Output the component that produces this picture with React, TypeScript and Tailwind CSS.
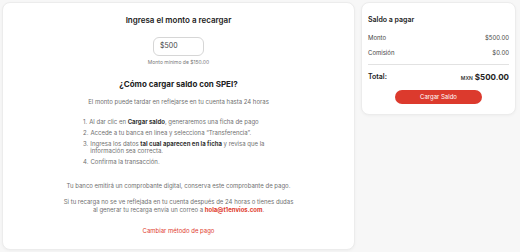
import React from "react";

export default function App() {
  const steps = [
    <>
      Al dar clic en <b className="font-bold text-[#333]">Cargar saldo</b>, generaremos una ficha de pago
    </>,
    <>Accede a tu banca en línea y selecciona “Transferencia”.</>,
    <>
      Ingresa los datos <b className="font-bold text-[#333]">tal cual aparecen en la ficha</b> y revisa que la
      <br />
      información sea correcta.
    </>,
    <>Confirma la transacción.</>,
  ];

  return (
    <div className="w-[520px] h-[252px] bg-[#f7f7f7] p-[2px] flex gap-[6px] items-start font-['Inter',sans-serif] text-[#222]">
      <section className="w-[353px] h-[248px] bg-white border border-[#ececec] rounded-[8px] shadow-[0_1px_3px_rgba(0,0,0,0.04)] flex flex-col items-center pt-[12px]">
        <h2 className="text-[8px] font-semibold leading-[10px]">Ingresa el monto a recargar</h2>
        <div className="mt-[12px] w-[51px] h-[19px] border border-[#d6d6d6] rounded-[6px] flex items-center px-[6px] text-[7px] text-[#444]">
          $500
        </div>
        <p className="mt-[3px] text-[5px] text-[#777] leading-[6px]">Monto mínimo de $150.00</p>
        <h2 className="mt-[14px] text-[8px] font-bold leading-[10px]">¿Cómo cargar saldo con SPEI?</h2>
        <p className="mt-[9px] text-[6px] text-[#707070] leading-[8px]">
          El monto puede tardar en reflejarse en tu cuenta hasta 24 horas
        </p>
        <ol className="mt-[12px] w-[220px] self-start ml-[80px] flex flex-col gap-[4px] text-[6px] text-[#707070] leading-[7px]">
          {steps.map((s, i) => (
            <li key={i} className="flex gap-[2px]">
              <span className="shrink-0">{i + 1}.</span>
              <span>{s}</span>
            </li>
          ))}
        </ol>
        <p className="mt-[17px] text-[6px] text-[#707070] leading-[8px]">
          Tu banco emitirá un comprobante digital, conserva este comprobante de pago.
        </p>
        <p className="mt-[8px] text-[6px] text-[#707070] leading-[8px] text-center">
          Si tu recarga no se ve reflejada en tu cuenta después de 24 horas o tienes dudas
          <br />
          al generar tu recarga envía un correo a{" "}
          <span className="font-bold text-[#e03a2c]">hola@t1envios.com</span>.
        </p>
        <button className="mt-[13px] text-[6px] text-[#e03a2c] leading-[8px]">Cambiar método de pago</button>
      </section>

      <aside className="w-[155px] h-[113px] bg-white border border-[#ececec] rounded-[8px] shadow-[0_1px_3px_rgba(0,0,0,0.04)] px-[6px] pt-[12px]">
        <h3 className="text-[7px] font-semibold leading-[9px]">Saldo a pagar</h3>
        <div className="mt-[10px] flex justify-between text-[6px] text-[#444] leading-[8px]">
          <span>Monto</span>
          <span>$500.00</span>
        </div>
        <div className="mt-[7px] flex justify-between text-[6px] text-[#444] leading-[8px]">
          <span>Comisión</span>
          <span>$0.00</span>
        </div>
        <div className="mt-[7px] border-t border-[#e2e2e2]" />
        <div className="mt-[7px] h-[10px] flex justify-between items-center">
          <span className="text-[7px] font-semibold">Total:</span>
          <span className="flex items-baseline gap-[2px]">
            <span className="text-[5px] font-semibold text-[#333]">MXN</span>
            <span className="text-[8px] font-bold">$500.00</span>
          </span>
        </div>
        <div className="mt-[8px] flex justify-center">
          <button className="w-[87px] h-[14px] rounded-full bg-[#dc3a2d] text-white text-[6px] leading-none">
            Cargar Saldo
          </button>
        </div>
      </aside>
    </div>
  );
}
